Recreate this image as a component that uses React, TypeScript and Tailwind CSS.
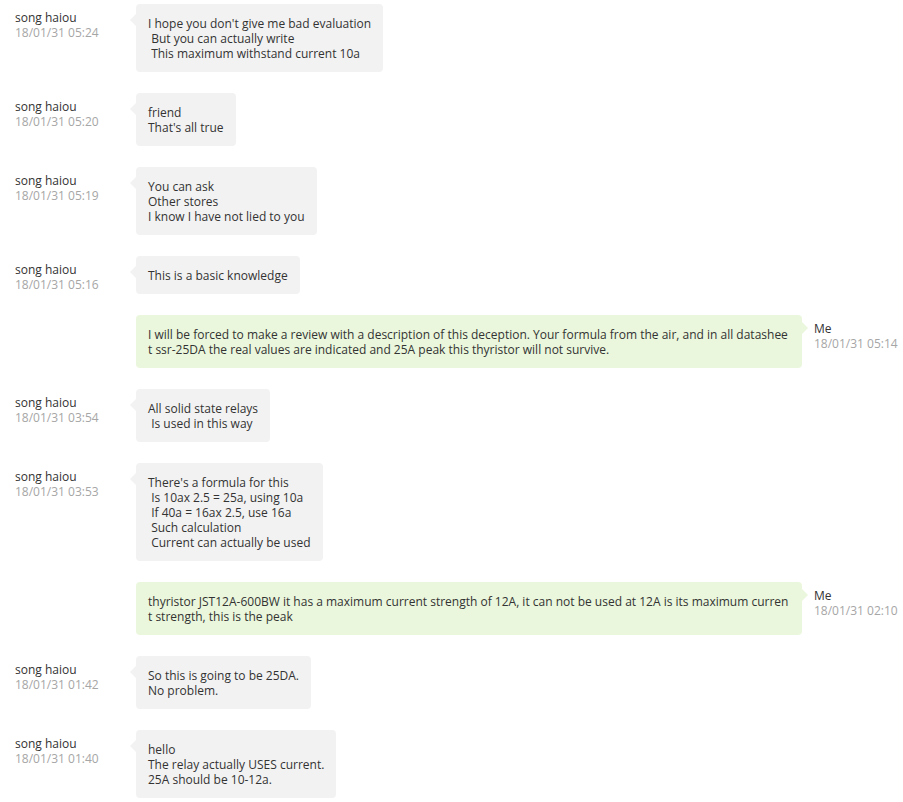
import React from "react";

type Message = {
  from: "them" | "me";
  time: string;
  text: string;
};

const messages: Message[] = [
  { from: "them", time: "18/01/31 05:24", text: "I hope you don't give me bad evaluation\n But you can actually write\n This maximum withstand current 10a" },
  { from: "them", time: "18/01/31 05:20", text: "friend\nThat's all true" },
  { from: "them", time: "18/01/31 05:19", text: "You can ask\nOther stores\nI know I have not lied to you" },
  { from: "them", time: "18/01/31 05:16", text: "This is a basic knowledge" },
  {
    from: "me",
    time: "18/01/31 05:14",
    text: "I will be forced to make a review with a description of this deception. Your formula from the air, and in all datasheet ssr-25DA the real values are indicated and 25A peak this thyristor will not survive.",
  },
  { from: "them", time: "18/01/31 03:54", text: "All solid state relays\n Is used in this way" },
  {
    from: "them",
    time: "18/01/31 03:53",
    text: "There's a formula for this\n Is 10ax 2.5 = 25a, using 10a\n If 40a = 16ax 2.5, use 16a\n Such calculation\n Current can actually be used",
  },
  {
    from: "me",
    time: "18/01/31 02:10",
    text: "thyristor JST12A-600BW it has a maximum current strength of 12A, it can not be used at 12A is its maximum current strength, this is the peak",
  },
  { from: "them", time: "18/01/31 01:42", text: "So this is going to be 25DA.\nNo problem." },
  { from: "them", time: "18/01/31 01:40", text: "hello\nThe relay actually USES current.\n25A should be 10-12a." },
];

function Meta({ name, time }: { name: string; time: string }) {
  return (
    <div className="pt-[6px] leading-[15px] text-[12px]">
      <div className="text-[#333333]">{name}</div>
      <div className="text-[#a6a6a6]">{time}</div>
    </div>
  );
}

function Row({ msg }: { msg: Message }) {
  const mine = msg.from === "me";
  return (
    <div className="flex items-start mb-[21px]">
      {/* Sender column */}
      <div className="w-[136px] shrink-0 pl-[15px]">
        {!mine && <Meta name="song haiou" time={msg.time} />}
      </div>

      {/* Bubble */}
      <div
        className={`relative max-w-[666px] rounded-[4px] pl-3 pr-3 pt-3 pb-[11px] text-[12px] leading-[15px] text-[#333333] whitespace-pre-wrap break-all ${
          mine ? "bg-[#eaf7dc]" : "bg-[#f2f2f2]"
        }`}
      >
        {mine ? (
          <span className="absolute right-[-6px] top-[7px] h-0 w-0 border-y-[6px] border-l-[6px] border-y-transparent border-l-[#eaf7dc]" />
        ) : (
          <span className="absolute left-[-6px] top-[10px] h-0 w-0 border-y-[6px] border-r-[6px] border-y-transparent border-r-[#f2f2f2]" />
        )}
        {msg.text}
      </div>

      {mine && (
        <div className="ml-3 shrink-0">
          <Meta name="Me" time={msg.time} />
        </div>
      )}
    </div>
  );
}

export default function App() {
  return (
    <div
      className="min-h-screen bg-white pt-[4px]"
      style={{ fontFamily: '"Open Sans", "Liberation Sans", sans-serif' }}
    >
      {messages.map((m, i) => (
        <Row key={i} msg={m} />
      ))}
    </div>
  );
}
